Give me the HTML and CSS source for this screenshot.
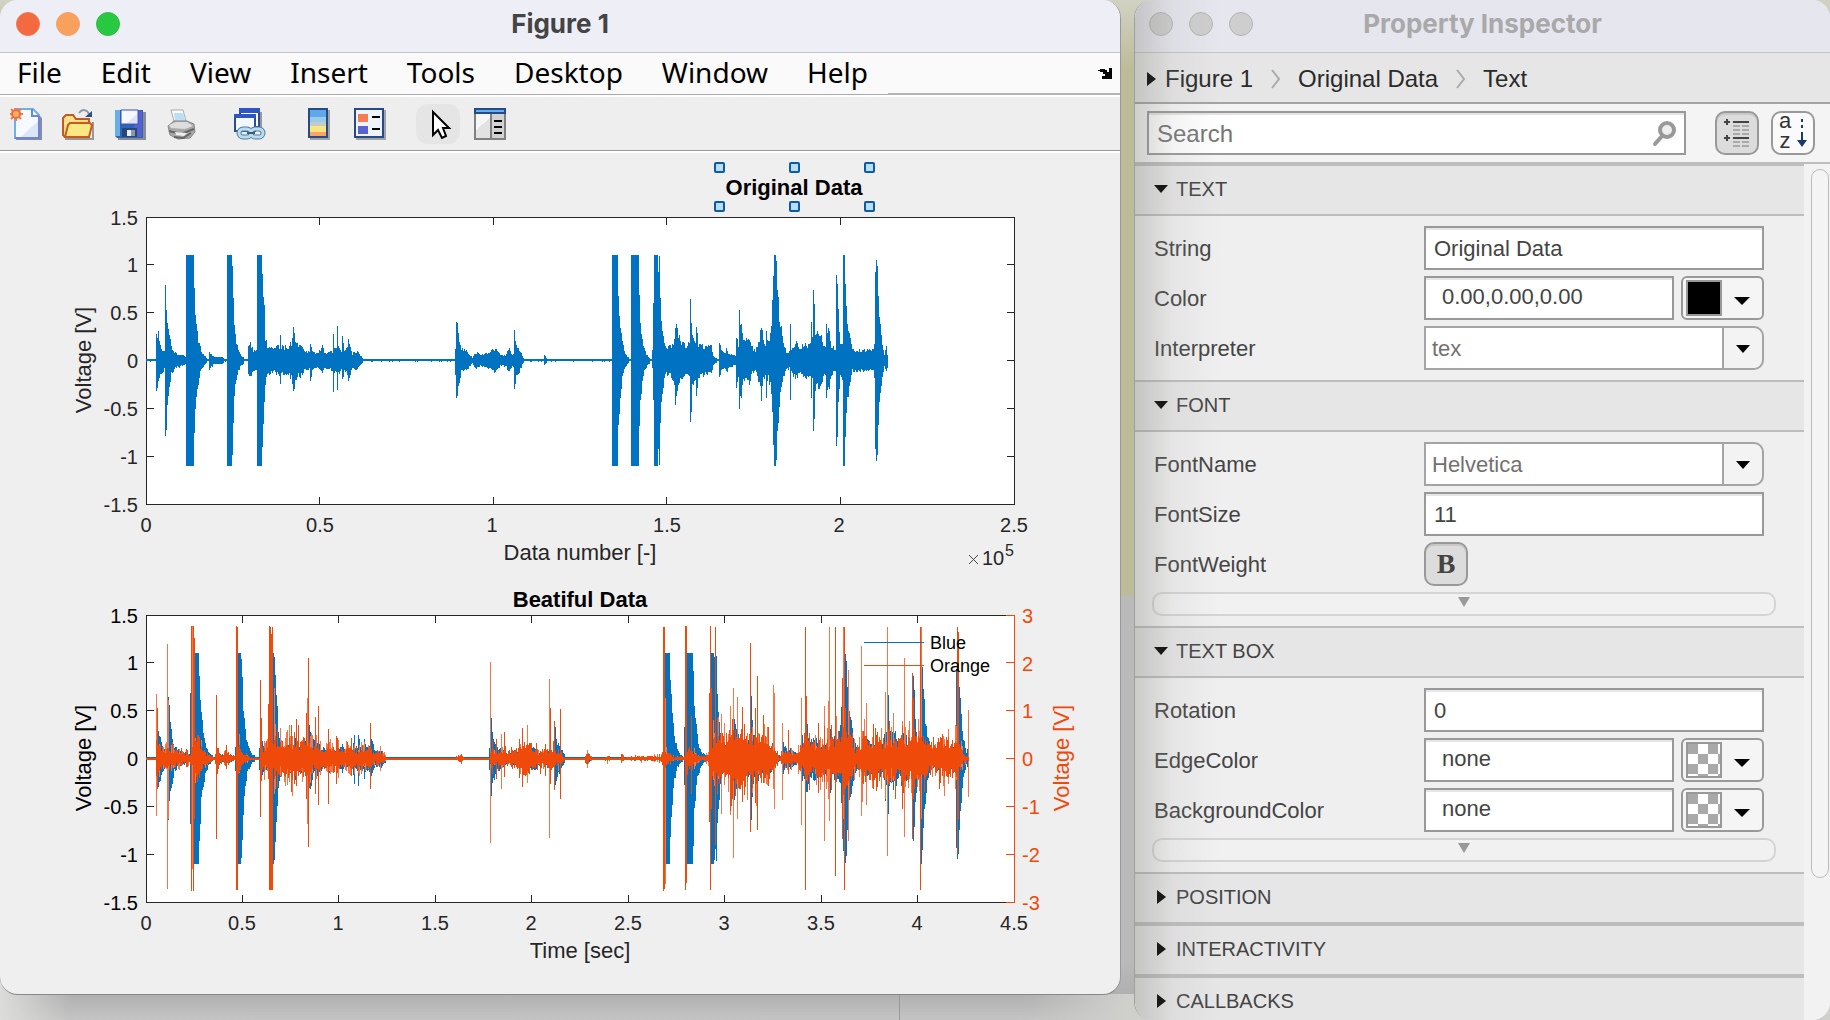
FILE: index.html
```html
<!DOCTYPE html>
<html lang="en">
<head>
<meta charset="utf-8">
<title>Figure 1</title>
<link rel="stylesheet" href="styles.css">
</head>
<body>
<main class="desktop">
  <section class="window figure-window">
    <header class="titlebar">
      <div class="lights">
        <button class="light close" aria-label="Close"></button>
        <button class="light minimize" aria-label="Minimize"></button>
        <button class="light maximize" aria-label="Zoom"></button>
      </div>
      <h1>Figure 1</h1>
    </header>
    <nav class="menubar">
      <div class="menus">
        <button>File</button><button>Edit</button><button>View</button><button>Insert</button><button>Tools</button><button>Desktop</button><button>Window</button><button>Help</button>
      </div>
      <button class="dock" aria-label="Dock figure">
        <svg width="14" height="11" viewBox="0 0 14 11" shape-rendering="crispEdges"><path d="M0 2h2v-1h5v1h2v2h2v-4h3v11h-10v-3h3v-2h-2v-2h-3v-1h-2z"/></svg>
      </button>
    </nav>
    <div class="toolbar">
      <div class="tools">
        <button aria-label="New Figure">
          <svg viewBox="0 0 32 32"><path d="M6 4h20l6 6v22H6z" fill="#8c8c98"/><path d="M5 1h18l6 6v23H5z" fill="#f6faff" stroke="#6cb2e8" stroke-width="2"/><path d="M22 1v7h7M29 8v22H5" fill="none" stroke="#6a86d8" stroke-width="2"/><path d="M11 29l17-16v16z" fill="#dbe6f8"/><path d="M6 0v13M0 6h13M1 1l10 10M11 1L1 11" stroke="#f47a50" stroke-width="2"/><circle cx="6" cy="6" r="4" fill="#f9b060" stroke="#ef6a3c" stroke-width="2"/></svg>
        </button>
        <button aria-label="Open File">
          <svg viewBox="0 0 32 32"><path d="M3 31h28V14" fill="none" stroke="#999" stroke-width="2"/><path d="M1 10l3-3h7l3 4h13v18H3l-2-2z" fill="#ffe08a" stroke="#c05a20" stroke-width="2"/><path d="M6 17l2-2h20l2 2-3 12H3z" fill="#f9e884" stroke="#c9591f" stroke-width="2"/><path d="M17 5c3-4 8-4 10 1" fill="none" stroke="#8b98a8" stroke-width="2"/><path d="M23 9h7V3z" fill="#284f88"/></svg>
        </button>
        <button aria-label="Save Figure">
          <svg viewBox="0 0 32 32"><path d="M4 4h28v28H4z" fill="#8b8b92"/><path d="M1 2h28v28H3l-2-2z" fill="#2e63b5"/><path d="M1 2h5v26H1z" fill="#6aaee6"/><path d="M23 3h5v26H18z" fill="#5561cf"/><path d="M7 2h17v14H7z" fill="#f6f7ff" stroke="#3853bb"/><path d="M13 15L23 6v9z" fill="#dfe3f5"/><path d="M8 20h15v9H8z" fill="#264878"/><path d="M13 22h4v6h-4z" fill="#eee"/><path d="M17 22h4v6h-4z" fill="#8b98a8"/></svg>
        </button>
        <button aria-label="Print Figure">
          <svg viewBox="0 0 32 32"><path d="M5 2h12l3 11H8z" fill="#fafcff" stroke="#aaa"/><path d="M8 5h9l2 7H9z" fill="#b9def6"/><path d="M2 18l6-5h13l7 3 1 8-5 6-12 1-8-4z" fill="#a8a8a8" stroke="#888"/><path d="M3 17l7-3h11l6 4-8 3-14-1z" fill="#ddd"/><path d="M3 23l12 3 13-5M8 29l9 1 8-5" fill="none" stroke="#666" stroke-width="2"/><path d="M9 24l12 1-3 3-8-1z" fill="#eee"/></svg>
        </button>
      </div>
      <div class="tools">
        <button aria-label="Link Plot">
          <svg viewBox="0 0 32 32"><path d="M8 4h20v17H8z" fill="#999"/><path d="M6 1h19v18H6z" fill="#fff" stroke="#2c4c94" stroke-width="2"/><path d="M5 0h21v5H5z" fill="#2f55c4"/><path d="M1 7h20v16H1z" fill="#f3f7ff" stroke="#2c4c94" stroke-width="2"/><path d="M0 6h22v4H0z" fill="#2f55c4"/><g fill="none" stroke="#577c9c" stroke-width="5"><rect x="5" y="21" width="12" height="8" rx="4"/><rect x="17" y="21" width="12" height="8" rx="4"/></g><g fill="none" stroke="#b8dcf2" stroke-width="3"><rect x="5" y="21" width="12" height="8" rx="4"/><rect x="17" y="21" width="12" height="8" rx="4"/></g><path d="M13 25h8" stroke="#3c5a70" stroke-width="2"/></svg>
        </button>
      </div>
      <div class="tools">
        <button aria-label="Insert Colorbar">
          <svg viewBox="0 0 32 32" shape-rendering="crispEdges"><path d="M8 2h20v30H8z" fill="#a4a4a4"/><path d="M6 0h20v30H6z" fill="#264a88"/><path d="M8 2h16v7H8z" fill="#5fa9e6"/><path d="M8 9h16v5H8z" fill="#9accea"/><path d="M8 14h16v4H8z" fill="#c4ccc8"/><path d="M8 18h16v6H8z" fill="#f9e680"/><path d="M8 24h16v4H8z" fill="#fba468"/></svg>
        </button>
        <button aria-label="Insert Legend">
          <svg viewBox="0 0 32 32" shape-rendering="crispEdges"><path d="M2 2h30v30H2z" fill="#a4a4a4"/><path d="M0 0h30v30H0z" fill="#264a88"/><path d="M2 2h26v26H2z" fill="#f0f2fc"/><path d="M4 6h10v8H4z" fill="#f47c50"/><path d="M4 18h10v8H4z" fill="#5a62d2"/><path d="M18 8h8v2h-8zM18 20h8v2h-8z"/></svg>
        </button>
      </div>
      <div class="tools">
        <button class="active" aria-label="Edit Plot">
          <svg viewBox="0 0 32 32"><path d="M11 4v23l5-5 4 8 4-2-3-8h6z" fill="#fff" stroke="#000" stroke-width="2"/></svg>
        </button>
        <button aria-label="Open Property Inspector">
          <svg viewBox="0 0 32 32" shape-rendering="crispEdges"><path d="M0 0h32v32H0z" fill="#808080"/><path d="M0 0h32v6H0z" fill="#264a88"/><path d="M2 2h28v2H2z" fill="#62b0ee"/><path d="M2 6h14v24H2z" fill="#f6f6f6"/><path d="M2 22l14-12v20H2z" fill="#e2e2e2"/><path d="M18 6h12v24H18z" fill="#d2d2d2"/><path d="M20 12h8v2h-8zM20 18h8v2h-8zM20 24h8v2h-8z"/></svg>
        </button>
      </div>
    </div>
    <svg class="canvas" viewBox="0 153 1120 841" role="img" aria-label="Voltage plots">
      <g class="axes">
        <rect x="146.500" y="217.500" width="868" height="287"/>
        <path d="M319.500 217v8m0 272v8M493.500 217v8m0 272v8M666.500 217v8m0 272v8M840.500 217v8m0 272v8M146 264.500h8m853 0h8M146 312.500h8m853 0h8M146 360.500h8m853 0h8M146 408.500h8m853 0h8M146 456.500h8m853 0h8"/>
      </g>
      <path class="wave blue" id="raw"/>
      <path class="wave blue-soft" id="raw-soft"/>
      <g class="ticks end">
        <text x="138" y="225">1.5</text><text x="138" y="272">1</text><text x="138" y="320">0.5</text><text x="138" y="368">0</text><text x="138" y="416">-0.5</text><text x="138" y="464">-1</text><text x="138" y="512">-1.5</text>
      </g>
      <g class="ticks mid">
        <text x="146" y="532">0</text><text x="320" y="532">0.5</text><text x="492" y="532">1</text><text x="667" y="532">1.5</text><text x="839" y="532">2</text><text x="1014" y="532">2.5</text>
      </g>
      <text class="label" x="580" y="560">Data number [-]</text>
      <text class="label" transform="translate(91 360) rotate(-90)">Voltage [V]</text>
      <path class="times" d="M969 555l9 9m0-9l-9 9"/>
      <g class="ticks"><text x="982" y="565">10</text><text class="power" x="1005" y="556">5</text></g>

      <text class="title" x="794" y="195">Original Data</text>
      <g class="handles">
        <rect x="715" y="163" width="9" height="9" rx="1"/><rect x="790" y="163" width="9" height="9" rx="1"/><rect x="865" y="163" width="9" height="9" rx="1"/>
        <rect x="715" y="202" width="9" height="9" rx="1"/><rect x="790" y="202" width="9" height="9" rx="1"/><rect x="865" y="202" width="9" height="9" rx="1"/>
      </g>

      <g class="axes">
        <rect x="146.500" y="615.500" width="868" height="287"/>
        <path d="M242.500 615v8m0 272v8M338.500 615v8m0 272v8M435.500 615v8m0 272v8M531.500 615v8m0 272v8M628.500 615v8m0 272v8M724.500 615v8m0 272v8M821.500 615v8m0 272v8M917.500 615v8m0 272v8M146 662.500h8M146 710.500h8M146 758.500h8M146 806.500h8M146 854.500h8"/>
        <path class="right-axis" d="M1006 615.500h8.500v287h-8.500M1006 662.500h8M1006 710.500h8M1006 758.500h8M1006 806.500h8M1006 854.500h8"/>
      </g>
      <path class="wave blue" id="low"/>
      <path class="wave blue-soft" id="low-soft"/>
      <path class="wave orange-soft" id="high-soft"/>
      <path class="wave orange" id="high"/>
      <g class="ticks end dark">
        <text x="138" y="623">1.5</text><text x="138" y="670">1</text><text x="138" y="718">0.5</text><text x="138" y="766">0</text><text x="138" y="814">-0.5</text><text x="138" y="862">-1</text><text x="138" y="910">-1.5</text>
      </g>
      <g class="ticks mid">
        <text x="146" y="930">0</text><text x="242" y="930">0.5</text><text x="338" y="930">1</text><text x="435" y="930">1.5</text><text x="531" y="930">2</text><text x="628" y="930">2.5</text><text x="724" y="930">3</text><text x="821" y="930">3.5</text><text x="917" y="930">4</text><text x="1014" y="930">4.5</text>
      </g>
      <g class="ticks red">
        <text x="1022" y="623">3</text><text x="1022" y="671">2</text><text x="1022" y="718">1</text><text x="1022" y="766">0</text><text x="1022" y="814">-1</text><text x="1022" y="862">-2</text><text x="1022" y="910">-3</text>
      </g>
      <text class="title" x="580" y="607">Beatiful Data</text>
      <text class="label" x="580" y="958">Time [sec]</text>
      <text class="label dark" transform="translate(91 758) rotate(-90)">Voltage [V]</text>
      <text class="label red" transform="translate(1069 758) rotate(-90)">Voltage [V]</text>
      <path class="wave blue" d="M864 642.500h60"/>
      <path class="wave orange" d="M864 665.500h60"/>
      <g class="legend"><text x="930" y="649">Blue</text><text x="930" y="672">Orange</text></g>
    </svg>
  </section>

  <section class="window inspector">
    <header class="titlebar">
      <div class="lights">
        <button class="light" aria-label="Close"></button>
        <button class="light" aria-label="Minimize"></button>
        <button class="light" aria-label="Zoom"></button>
      </div>
      <h2>Property Inspector</h2>
    </header>
    <nav class="crumbs">
      <span class="tri right"></span>
      <a href="#figure">Figure 1</a>
      <svg width="11" height="20" viewBox="0 0 11 20"><path d="M2 1l7 9-7 9"/></svg>
      <a href="#axes">Original Data</a>
      <svg width="11" height="20" viewBox="0 0 11 20"><path d="M2 1l7 9-7 9"/></svg>
      <a href="#text">Text</a>
    </nav>
    <div class="searchbar">
      <div class="search">
        <input type="text" placeholder="Search" aria-label="Search">
        <svg width="26" height="26" viewBox="0 0 26 26"><circle cx="15" cy="9" r="7" fill="#eee" stroke="#999" stroke-width="4"/><path d="M10 15l-7 8" stroke="#999" stroke-width="4" stroke-linecap="round"/></svg>
      </div>
      <button class="mode pressed" aria-label="Group properties">
        <svg width="28" height="30" viewBox="0 0 28 30" shape-rendering="crispEdges"><path d="M3 1h2v2h2v2H5v2H3V5H1V3h2zM3 17h2v2h2v2H5v2H3v-2H1v-2h2zM10 3h16v2H10zM10 19h16v2H10z" fill="#444"/><path d="M10 7h7v2h-7zM19 7h7v2h-7zM10 11h7v2h-7zM19 11h7v2h-7zM10 15h7v2h-7zM19 15h7v2h-7zM10 23h7v2h-7zM19 23h7v2h-7zM10 27h7v2h-7zM19 27h7v2h-7z" fill="#aaa"/></svg>
      </button>
      <button class="mode sort" aria-label="Sort alphabetically">
        <span class="az"><span>a</span><span>z</span></span>
        <svg width="10" height="28" viewBox="0 0 10 28"><path d="M4 0h2v3H4zM4 6h2v3H4zM4 13h2v8h4l-5 7-5-7h4z" fill="#1c3a66"/></svg>
      </button>
    </div>
    <div class="scroller">
      <div class="props">
        <button class="group"><span class="tri down"></span>TEXT</button>
        <div class="body">
          <div class="row"><label for="string">String</label><input id="string" type="text" value="Original Data"></div>
          <div class="row"><label for="color">Color</label><div class="color"><input id="color" type="text" value="0.00,0.00,0.00"><button aria-label="Pick color"><span class="swatch black"></span><span class="tri down"></span></button></div></div>
          <div class="row"><label for="interp">Interpreter</label><div class="select"><select id="interp"><option>tex</option></select><span class="tri down"></span></div></div>
        </div>
        <button class="group"><span class="tri down"></span>FONT</button>
        <div class="body">
          <div class="row"><label for="fname">FontName</label><div class="select"><select id="fname"><option>Helvetica</option></select><span class="tri down"></span></div></div>
          <div class="row"><label for="fsize">FontSize</label><input id="fsize" type="text" value="11"></div>
          <div class="row"><label for="weight">FontWeight</label><button id="weight" class="mode pressed bold">B</button></div>
          <button class="more" aria-label="More font properties"><span class="tri down"></span></button>
        </div>
        <button class="group"><span class="tri down"></span>TEXT BOX</button>
        <div class="body">
          <div class="row"><label for="rot">Rotation</label><input id="rot" type="text" value="0"></div>
          <div class="row"><label for="edge">EdgeColor</label><div class="color"><input id="edge" type="text" value="none"><button aria-label="Pick edge color"><span class="swatch none"></span><span class="tri down"></span></button></div></div>
          <div class="row"><label for="back">BackgroundColor</label><div class="color"><input id="back" type="text" value="none"><button aria-label="Pick background color"><span class="swatch none"></span><span class="tri down"></span></button></div></div>
          <button class="more" aria-label="More text box properties"><span class="tri down"></span></button>
        </div>
        <button class="group"><span class="tri right"></span>POSITION</button>
        <button class="group"><span class="tri right"></span>INTERACTIVITY</button>
        <button class="group"><span class="tri right"></span>CALLBACKS</button>
      </div>
      <div class="track"><div class="thumb"></div></div>
    </div>
  </section>
</main>
<script src="plots.js"></script>
</body>
</html>
```
FILE: plots.js
```js
// Envelope of the recorded signal: column, half height.
const raw = [146,1,155,1,156,25,158,24,160,14,162,10,164,8,165,75,166,57,167,36,169,24,171,12,174,8,177,6,182,5,185,3,186,105,193,105,194,72,195,50,196,34,197,26,199,14,202,6,206,2,208,1,209,9,211,6,213,3,221,3,226,1,227,105,231,105,232,94,233,62,234,40,235,26,236,18,238,9,241,4,245,1,247,1,248,14,250,16,253,9,256,10,257,105,261,105,262,86,263,63,264,44,265,22,267,13,270,11,274,11,279,13,280,20,281,12,287,12,291,16,293,30,295,20,298,12,300,14,304,9,309,8,310,18,312,8,317,6,322,12,325,6,332,8,333,26,334,10,336,10,337,28,338,12,341,8,342,19,344,9,347,12,348,21,350,12,352,6,357,8,360,4,363,1,454,1,455,12,456,40,457,30,459,18,461,10,466,9,468,7,472,2,475,7,480,5,485,6,490,7,493,10,497,9,500,4,505,5,509,10,512,5,513,5,514,28,516,15,518,12,521,6,523,2,525,1,543,1,544,4,547,1,611,1,612,105,617,105,618,64,619,45,620,32,622,17,624,8,627,3,630,1,631,105,638,105,639,54,640,36,642,20,644,10,647,4,651,1,652,8,653,46,654,105,657,105,658,88,659,104,660,62,661,45,662,30,664,14,667,12,671,14,674,20,675,37,677,26,680,17,684,14,689,15,690,61,691,42,692,22,695,15,696,30,698,14,703,13,707,12,711,12,713,4,718,1,719,17,721,10,724,6,726,10,729,6,735,4,736,22,738,13,739,48,740,38,742,22,745,16,749,22,751,12,755,8,759,20,761,33,763,17,765,15,766,30,768,16,771,28,773,84,774,105,775,105,776,99,777,70,778,55,779,40,781,28,783,15,786,8,789,7,790,37,791,9,795,16,800,12,804,15,810,14,811,39,812,20,813,70,814,50,815,24,820,25,823,16,825,14,826,33,829,24,831,14,835,9,836,85,837,76,838,46,840,16,842,16,843,105,844,105,845,76,846,58,847,38,849,22,852,9,873,9,874,14,875,88,876,100,877,94,878,64,879,46,880,30,882,15,884,5,886,12,887,6];

// Noise floor of the high-pass signal.
const noise = [146,1,155,1,156,18,158,14,165,10,168,14,175,8,185,6,190,3,192,12,197,25,200,20,203,8,208,4,214,1,217,15,220,5,222,2,225,9,232,3,235,2,238,16,243,6,250,1,259,1,261,20,265,10,268,12,275,26,280,17,285,19,292,21,305,20,312,16,318,12,325,11,345,11,370,11,375,5,381,8,386,1,455,1,460,4,464,1,489,1,491,12,497,7,515,9,523,19,530,17,538,8,550,12,560,8,564,1,584,1,587,5,592,1,604,1,606,3,610,1,620,1,621,6,624,1,640,2,650,2,661,3,664,12,668,6,674,1,685,2,688,12,700,2,708,4,712,24,735,30,750,30,770,20,776,8,779,1,783,8,795,5,800,14,808,18,830,20,843,36,850,24,857,8,862,24,885,22,912,24,922,24,930,17,945,22,958,20,963,5,969,2];

// Transients: column, height above zero, height below zero.
const spikes = [156,64,57,157,50,30,167,114,130,168,58,60,191,132,132,192,132,110,193,132,132,194,120,60,216,63,80,236,132,131,237,131,131,260,78,58,261,40,22,268,54,20,269,132,131,270,131,131,271,124,131,272,131,131,274,70,35,275,34,30,289,33,22,291,33,33,294,26,18,306,45,40,307,60,65,308,100,88,311,25,14,315,41,35,318,52,46,328,29,45,336,22,25,370,35,30,380,12,12,490,96,84,496,19,20,501,24,30,504,26,18,522,30,28,527,33,18,549,79,79,550,50,25,554,37,31,560,49,40,663,131,132,664,131,130,665,60,125,685,132,131,686,132,124,691,42,35,709,65,63,710,132,131,711,70,50,715,131,86,717,40,35,721,44,55,730,52,56,733,70,99,737,61,60,750,115,73,755,50,44,757,82,71,773,73,30,774,65,50,782,35,41,788,28,15,801,60,66,805,131,131,806,62,20,818,35,34,824,52,82,828,57,40,829,131,62,835,131,117,836,42,12,842,80,80,843,131,60,844,131,131,845,50,30,848,88,82,861,112,57,866,55,46,885,66,40,887,131,97,893,45,22,902,32,50,904,100,78,912,85,80,913,60,40,920,131,131,921,131,60,957,131,95,958,126,60,968,48,38];

let seed = 17;
const random = () => (seed = (seed * 16807) % 2147483647) / 2147483647;

function envelope(points, x) {
  let i = 0;
  while (i < points.length - 2 && points[i + 2] <= x) i += 2;
  if (i >= points.length - 2) return points[points.length - 1];
  const t = (x - points[i]) / (points[i + 2] - points[i]);
  return points[i + 1] + t * (points[i + 3] - points[i + 1]);
}

function draw(id, columns, zero) {
  let strong = "", soft = "";
  for (const [x, up, down, light] of columns) {
    const part = `M${x + 0.5} ${zero - Math.round(up)}V${zero + 1 + Math.round(down)}`;
    if (light) soft += part; else strong += part;
  }
  document.getElementById(id).setAttribute("d", strong);
  document.getElementById(id + "-soft").setAttribute("d", soft);
}

// One column per pixel; quiet stretches stay a two pixel line.
function signal(scale, last) {
  const columns = [];
  for (let x = 146; x <= last; x++) {
    const a = envelope(raw, 146 + (x - 146) / scale);
    if (a < 2) {
      columns.push([x, 1, random() < 0.15 ? 1 : 0, false]);
      continue;
    }
    const jitter = () => (a > 60 ? 1 : 0.85 + random() * 0.4);
    columns.push([x, a * jitter(), a * jitter(), false]);
  }
  return columns;
}

function flanks(columns) {
  const out = columns.slice();
  for (let i = 1; i < columns.length; i++) {
    const [x, up, down] = columns[i];
    const before = columns[i - 1];
    if (before[1] > up + 12 && up > 3) out.push([x, up + 4, 0, true], [x, 0, down + 4, true], [x, up, down, false]);
  }
  return out;
}

draw("raw", signal(1, 887), 360);
draw("low", signal(1.111, 968), 758);

const high = [];
for (let x = 146; x <= 968; x++) {
  const a = envelope(noise, x);
  if (a <= 1) {
    high.push([x, 0, 1, false]);
    continue;
  }
  const reach = () => a * (0.4 + random() * 0.6);
  const up = reach(), down = reach();
  high.push([x, up, down, false]);
  if (random() < 0.4) high.push([x, up + a * random() * 0.9, down + a * random() * 0.9, random() < 0.6]);
}
for (let i = 0; i < spikes.length; i += 3) {
  const clipped = spikes[i + 1] > 128 && spikes[i + 2] > 128;
  high.push([spikes[i], spikes[i + 1], spikes[i + 2], !clipped && random() < 0.5]);
}
draw("high", high, 758);
```
FILE: styles.css
```css
* { box-sizing: border-box; }
body {
  margin: 0;
  font-family: "Liberation Sans", Arial, sans-serif;
  font-size: 22px;
  color: #444;
  overflow: hidden;
}
button, input, select { font: inherit; color: inherit; margin: 0; padding: 0; border: 0; background: none; border-radius: 0; }
h1, h2 { margin: 0; font: 700 26px/48px Inter, sans-serif; }

.desktop {
  display: grid;
  grid-template-columns: 1121fr 696fr;
  column-gap: 13px;
  align-items: start;
  height: 100vh;
  background:
    linear-gradient(#999, #999) 899px 100% / 1px 28px no-repeat,
    linear-gradient(90deg, #dcdcda, rgba(190, 190, 190, 0) 70px) 0 100% / 100% 40px no-repeat,
    linear-gradient(90deg, transparent 1030px, #cfcfcc 1125px) 0 100% / 100% 26px no-repeat,
    linear-gradient(#d2d2c4, #bcbb9a 70px, #bcbb9a 596px, #bababa 596px, #bababa 960px, #b0b0b0 994px, #c4c4c4);
}
.window { overflow: hidden; border-right: 1px solid #999; }
.figure-window { border-radius: 18px; background: #efefef; border-bottom: 1px solid #888; }
.inspector {
  position: relative;
  display: flex;
  flex-direction: column;
  height: 100vh;
  border: 0;
  border-left: 1px solid #a0a0a0;
  border-radius: 18px;
  background: #efefef;
}
.inspector::after {
  content: "";
  position: absolute;
  inset: 0 auto 0 0;
  width: 84px;
  background: linear-gradient(90deg, rgba(120, 120, 110, .3), rgba(160, 160, 160, .12) 45%, transparent);
  pointer-events: none;
}

.titlebar {
  display: grid;
  grid-template-columns: 1fr auto 1fr;
  height: 53px;
  flex: none;
  background: #eeeef7;
  border-bottom: 1px solid #c4c4c4;
}
.titlebar h2 { color: #a9a9a9; }
.inspector .titlebar { background: #e6e6ee; }
.lights { display: flex; gap: 16px; padding: 12px 16px; }
.inspector .lights { padding-left: 14px; }
.light { width: 24px; height: 24px; border-radius: 50%; background: #cecece; border: 1px solid #b4b4b4; }
.close { background: #f4693f; border-color: #ee7a58; }
.minimize { background: #f9a05c; border-color: #f0a070; }
.maximize { background: #28c840; border-color: #38b84c; }

.menubar { display: flex; height: 42px; background: #fafafa; }
.menus { display: flex; border-bottom: 1px solid #aaa; flex: none; width: 888px; }
.menus button { padding: 0 22px 0 17px; font: 28px/38px "Noto Sans", sans-serif; height: 38px; color: #000; white-space: nowrap; }
.dock { flex: 1; display: flex; justify-content: flex-end; align-items: center; padding-right: 8px; border-bottom: 2px solid #b4b4b4; }

.toolbar {
  display: flex;
  align-items: center;
  gap: 36px;
  height: 56px;
  padding-left: 10px;
  background: #eee;
  border-top: 2px solid #fff;
  border-bottom: 1px solid #999;
}
.tools { display: flex; gap: 20px; align-items: center; }
.tools button { width: 32px; height: 40px; display: flex; align-items: center; }
.tools svg { width: 32px; height: 32px; }
.tools .active { width: 44px; margin: 0 -6px; padding: 0 6px; border-radius: 12px; background: #e5e5e5; }

.canvas { display: block; width: 100%; height: auto; border-top: 2px solid #fff; }
.axes { fill: none; stroke: #262626; shape-rendering: crispEdges; }
.axes rect { fill: #fff; }
.axes .right-axis { stroke: #f04a0a; }
.wave { fill: none; stroke-width: 1; shape-rendering: crispEdges; }
.blue { stroke: #0072c2; }
.blue-soft { stroke: #2f96d6; }
.orange { stroke: #f04a0a; }
.orange-soft { stroke: #f4774a; }
.ticks { font-size: 20px; fill: #262626; }
.end { text-anchor: end; }
.mid { text-anchor: middle; }
.power { font-size: 16px; }
.times { stroke: #444; fill: none; }
.label { font-size: 22px; fill: #262626; text-anchor: middle; }
.title { font-size: 22px; font-weight: 700; fill: #000; text-anchor: middle; }
.dark { fill: #000; }
.red { fill: #f04a0a; }
.legend { font-size: 18px; fill: #000; }
.handles { fill: #b8def8; stroke: #0c5aa4; stroke-width: 2; }

.tri { display: inline-block; flex: none; width: 0; height: 0; }
.tri.down { border: 7px solid transparent; border-top: 8px solid #000; border-bottom: 0; }
.tri.right { border: 7px solid transparent; border-left: 9px solid #000; border-right: 0; }

.crumbs {
  display: flex;
  align-items: center;
  flex: none;
  height: 51px;
  padding: 2px 0 0 12px;
  background: #e6e6e6;
  border-bottom: 2px solid #a4a4a4;
  font-size: 24px;
}
.crumbs a { color: #2a2a2a; text-decoration: none; }
.crumbs a:first-of-type { margin-left: 9px; }
.crumbs svg { margin: 0 17px; fill: none; stroke: #aaa; stroke-width: 2; }

.searchbar {
  display: flex;
  align-items: center;
  flex: none;
  height: 60px;
  padding: 1px 15px 1px 12px;
  background: #f4f4f4;
  border-bottom: 2px solid #bdbdbd;
}
.search { flex: 1; display: flex; align-items: center; margin-right: 29px; height: 44px; padding: 2px 6px 0 8px; background: #fff; border: 2px solid #999; box-shadow: inset 0 2px 0 #e4e4e4; }
.search input { flex: 1; min-width: 0; font-size: 24px; outline: 0; }
.search input::placeholder { color: #757575; opacity: 1; }
.mode { flex: none; display: flex; align-items: center; justify-content: center; width: 44px; height: 44px; border: 2px solid #999; border-radius: 10px; background: #fafafa; }
.mode.pressed { background: #dcdcdc; box-shadow: inset 0 2px 0 #c8c8c8; }
.sort { margin-left: 12px; gap: 6px; }
.az { display: grid; grid-template-rows: 20px 20px; font-size: 22px; line-height: 20px; color: #333; padding-bottom: 4px; }

.scroller { display: flex; flex: 1; min-height: 0; overflow: hidden; }
.props { flex: 1; min-width: 0; }
.group {
  display: flex;
  align-items: center;
  width: 100%;
  height: 52px;
  gap: 8px;
  padding: 0 0 2px 19px;
  font-size: 20px;
  background: #e6e6e6;
  border: solid #bdbdbd;
  border-width: 2px 0;
}
.group .right { margin: 0 2px 0 3px; }
.body { display: flex; flex-direction: column; gap: 6px; padding: 10px 28px 10px 17px; }
.row { display: grid; grid-template-columns: 270px 1fr; align-items: center; height: 44px; padding: 0 12px 0 2px; }
.row label { padding-top: 2px; }
.row input { width: 100%; min-width: 0; height: 44px; padding: 2px 8px 0; background: #fff; border: 2px solid #999; box-shadow: inset 0 2px 0 #e6e6e6; }
.color { display: grid; grid-template-columns: 1fr 83px; gap: 7px; }
.row .color input { padding: 0 16px 2px; }
.color button { display: flex; align-items: center; gap: 12px; height: 44px; padding-left: 3px; border: 2px solid #999; border-radius: 6px; background: #f5f5f5; }
.color .tri { border-width: 8px 8px 0; margin-top: 6px; }
.swatch { width: 36px; height: 36px; border: 2px solid #999; }
.black { background: #000; }
.none { background: repeating-conic-gradient(#fff 0 25%, #a9a9a9 0 50%) 0 0 / 20px 20px; }
.select { position: relative; }
.select select {
  appearance: none;
  width: 100%;
  height: 44px;
  padding-left: 6px;
  color: #757070;
  border: 2px solid #a4a4a4;
  border-radius: 0 10px 10px 0;
  background: linear-gradient(90deg, #a4a4a4 2px, #f3f3f3 2px) 100% 0 / 40px 100% no-repeat #fff;
}
.select .tri { position: absolute; right: 14px; top: 19px; pointer-events: none; }
.bold { font: 700 28px/40px "Liberation Serif", serif; color: #444; }
.more { height: 24px; border: 2px solid #d4d4d4; border-radius: 10px; background: #f1f1f1; }
.more .tri { display: block; margin: -4px auto 0; border-width: 10px 6px 0; border-top-color: #999; }
.track { flex: none; width: 26px; padding: 5px 1px 0 7px; background: #f2f2f2; }
.thumb { height: 709px; border: 1px solid #bbb; border-radius: 9px; background: #f4f4f4; }
```
